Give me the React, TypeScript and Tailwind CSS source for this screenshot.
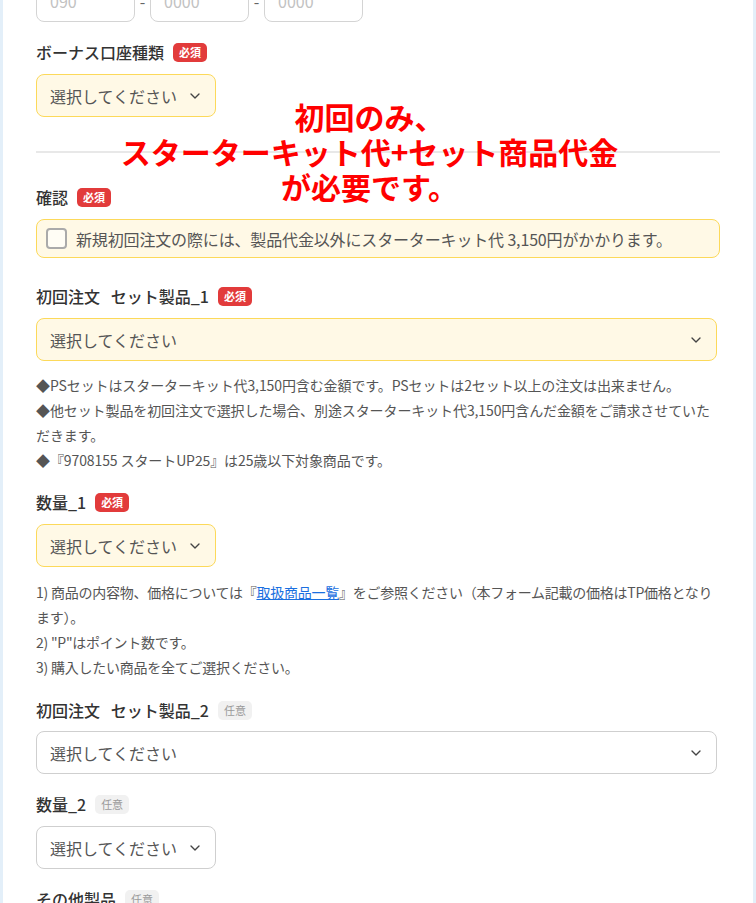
import { ChevronDown } from 'lucide-react';

const font = { fontFamily: '"Noto Sans CJK JP", "Noto Sans", sans-serif' };

const Required = () => (
    <span className="inline-flex items-center h-[19px] px-[6px] rounded-[5px] bg-[#e23b3b] text-white text-[11px] font-bold leading-none">必須</span>
);

const Optional = () => (
    <span className="inline-flex items-center h-[19px] px-[6px] rounded-[5px] bg-[#f1f1f1] text-[#9a9a9a] text-[11px] leading-none">任意</span>
);

const Label = ({ text, required }: { text: string; required?: boolean }) => (
    <div className="flex items-center gap-[9px] h-[24px]">
        <span className="text-[16px] font-medium text-[#333] whitespace-pre">{text}</span>
        {required ? <Required /> : <Optional />}
    </div>
);

const Select = ({ wide, highlight }: { wide?: boolean; highlight?: boolean }) => (
    <div
        className={`flex items-center justify-between h-[43px] pl-[13px] pr-[12px] rounded-lg border-[1.5px] ${wide ? 'w-[681px]' : 'w-[180px]'} ${highlight ? 'bg-[#fff9e6] border-[#fcd95a]' : 'bg-white border-[#cfcfcf]'}`}
    >
        <span className="text-[16px] text-[#555]">選択してください</span>
        <ChevronDown size={16} strokeWidth={2} className="text-[#444]" />
    </div>
);

export default function App() {
    return (
        <div className="min-h-screen bg-[#e3eff9] px-[3px]" style={font}>
            <div className="relative bg-white h-[903px] overflow-hidden px-[33px] w-[750px]">
                {/* phone inputs (scrolled, top cut off) */}
                <div className="flex items-center gap-[3px] -mt-[20px]">
                    <div className="w-[99px] h-[42px] rounded-lg border-[1.5px] border-[#d4d4d4] flex items-center px-[13px] text-[16px] text-[#c2c2c2]">090</div>
                    <span className="w-[9px] text-center text-[#666]">-</span>
                    <div className="w-[99px] h-[42px] rounded-lg border-[1.5px] border-[#d4d4d4] flex items-center px-[13px] text-[16px] text-[#c2c2c2]">0000</div>
                    <span className="w-[9px] text-center text-[#666]">-</span>
                    <div className="w-[99px] h-[42px] rounded-lg border-[1.5px] border-[#d4d4d4] flex items-center px-[13px] text-[16px] text-[#c2c2c2]">0000</div>
                </div>

                <div className="mt-[18px]">
                    <Label text="ボーナス口座種類" required />
                    <div className="mt-[10px]">
                        <Select highlight />
                    </div>
                </div>

                <div className="mt-[34px] h-[2px] bg-[#e8e8e8] w-[684px]" />

                <div className="mt-[32px]">
                    <Label text="確認" required />
                    <div className="mt-[10px] w-[684px] h-[39px] rounded-lg border-[1.5px] border-[#fcd95a] bg-[#fff9e6] flex items-center pl-[9px] gap-[9px]">
                        <span className="w-[21px] h-[21px] rounded-[4px] border-2 border-[#aaa] bg-[#fffdf5]" />
                        <span className="text-[16px] text-[#555] tracking-[-0.15px]">新規初回注文の際には、製品代金以外にスターターキット代 3,150円がかかります。</span>
                    </div>
                </div>

                <div className="mt-[26px]">
                    <Label text="初回注文   セット製品_1" required />
                    <div className="mt-[10px]">
                        <Select wide highlight />
                    </div>
                    <div className="mt-[12px] text-[14px] leading-[25px] text-[#555] w-[684px] tracking-[-0.1px]">
                        <p>◆PSセットはスターターキット代3,150円含む金額です。PSセットは2セット以上の注文は出来ません。</p>
                        <p>◆他セット製品を初回注文で選択した場合、別途スターターキット代3,150円含んだ金額をご請求させていただきます。</p>
                        <p>◆『9708155 スタートUP25』は25歳以下対象商品です。</p>
                    </div>
                </div>

                <div className="mt-[17px]">
                    <Label text="数量_1" required />
                    <div className="mt-[10px]">
                        <Select highlight />
                    </div>
                    <div className="mt-[13px] text-[14px] leading-[25px] text-[#555] w-[684px] tracking-[-0.25px]">
                        <p>
                            1) 商品の内容物、価格については『<a href="#" className="text-[#1a6fe0] underline">取扱商品一覧</a>』をご参照ください（本フォーム記載の価格はTP価格となります）。
                        </p>
                        <p>2) "P"はポイント数です。</p>
                        <p>3) 購入したい商品を全てご選択ください。</p>
                    </div>
                </div>

                <div className="mt-[18px]">
                    <Label text="初回注文   セット製品_2" />
                    <div className="mt-[9px]">
                        <Select wide />
                    </div>
                </div>

                <div className="mt-[18px]">
                    <Label text="数量_2" />
                    <div className="mt-[10px]">
                        <Select />
                    </div>
                </div>

                <div className="mt-[18px]">
                    <Label text="その他製品" />
                </div>

                {/* annotation overlay */}
                <div className="absolute top-[99px] left-0 w-[733px] text-center text-[30px] leading-[35px] font-bold text-[#ff0000]">
                    <p>初回のみ、</p>
                    <p>スターターキット代+セット商品代金</p>
                    <p>が必要です。</p>
                </div>
            </div>
        </div>
    );
}
